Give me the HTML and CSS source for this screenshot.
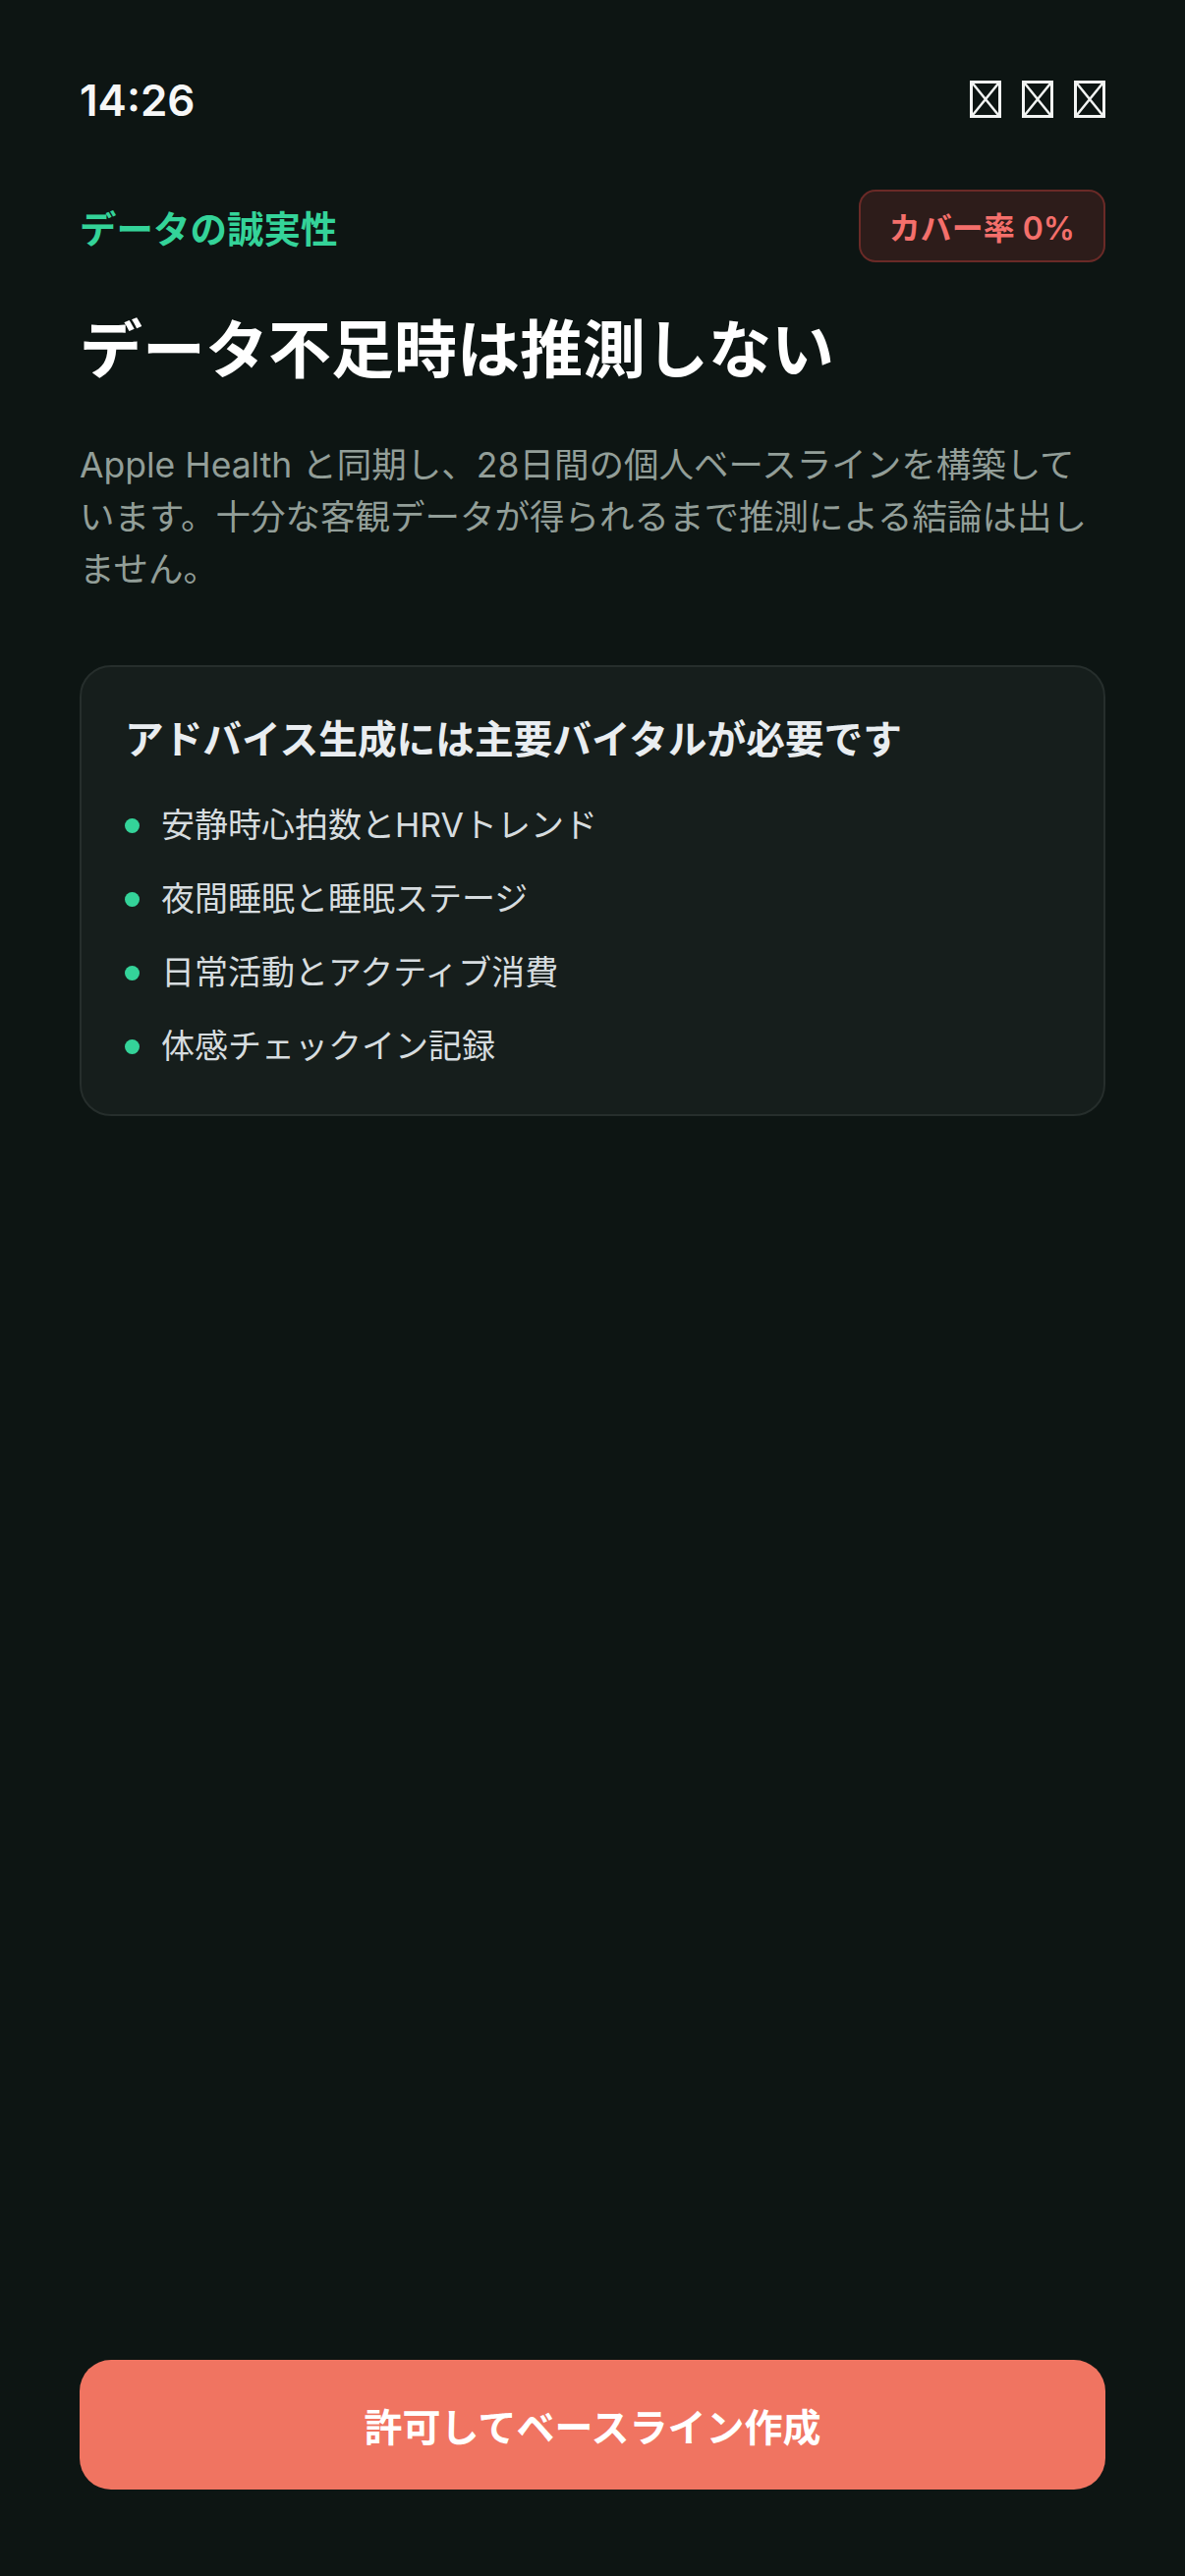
FILE: index.html
```html
<!DOCTYPE html>
<html lang="ja">
<head>
<meta charset="utf-8">
<title>データの誠実性</title>
<link rel="stylesheet" href="styles.css">
</head>
<body>
<div class="page">
  <div class="status-bar">
    <span class="time">14:26</span>
    <div class="status-icons">
      <svg class="tofu" viewBox="0 0 32 38"><rect x="1.5" y="1.5" width="29" height="35" fill="none" stroke="#f2f4f3" stroke-width="3"/><path d="M3 3 L29 35 M29 3 L3 35" stroke="#f2f4f3" stroke-width="2.5"/></svg>
      <svg class="tofu" viewBox="0 0 32 38"><rect x="1.5" y="1.5" width="29" height="35" fill="none" stroke="#f2f4f3" stroke-width="3"/><path d="M3 3 L29 35 M29 3 L3 35" stroke="#f2f4f3" stroke-width="2.5"/></svg>
      <svg class="tofu" viewBox="0 0 32 38"><rect x="1.5" y="1.5" width="29" height="35" fill="none" stroke="#f2f4f3" stroke-width="3"/><path d="M3 3 L29 35 M29 3 L3 35" stroke="#f2f4f3" stroke-width="2.5"/></svg>
    </div>
  </div>

  <div class="eyebrow-row">
    <span class="eyebrow">データの誠実性</span>
    <span class="badge">カバー率 0%</span>
  </div>

  <h1 class="title">データ不足時は推測しない</h1>

  <p class="lead">Apple Health と同期し、28日間の個人ベースラインを構築しています。十分な客観データが得られるまで推測による結論は出しません。</p>

  <section class="card">
    <h2 class="card-title">アドバイス生成には主要バイタルが必要です</h2>
    <ul class="req-list">
      <li class="req-item"><span class="dot"></span>安静時心拍数とHRVトレンド</li>
      <li class="req-item"><span class="dot"></span>夜間睡眠と睡眠ステージ</li>
      <li class="req-item"><span class="dot"></span>日常活動とアクティブ消費</li>
      <li class="req-item"><span class="dot"></span>体感チェックイン記録</li>
    </ul>
  </section>

  <button class="cta">許可してベースライン作成</button>
</div>
</body>
</html>
```

FILE: styles.css
```css
* { box-sizing: border-box; }

html, body {
  margin: 0;
  padding: 0;
  background: #0d1513;
}

body {
  font-family: Inter, "Noto Sans CJK JP", "Noto Sans", sans-serif;
  color: #ffffff;
}

.page {
  min-height: 2622px;
  display: flex;
  flex-direction: column;
  padding: 71px 81px 88px;
}

.status-bar {
  height: 60px;
  display: flex;
  align-items: center;
  justify-content: space-between;
}

.time {
  font-size: 44px;
  font-weight: 600;
  color: #f6f7f7;
  padding-top: 2px;
}

.status-icons {
  display: flex;
  gap: 21px;
  align-items: center;
}

.tofu {
  width: 32px;
  height: 38px;
  display: block;
}

.eyebrow-row {
  margin-top: 62px;
  height: 74px;
  display: flex;
  align-items: center;
  justify-content: space-between;
}

.eyebrow {
  font-size: 37.5px;
  font-weight: 700;
  color: #34d399;
}

.badge {
  height: 74px;
  padding: 0 29px;
  display: flex;
  align-items: center;
  border: 2px solid #6a2a27;
  background: #2d1c1a;
  border-radius: 17px;
  color: #f46f6b;
  font-size: 32px;
  font-weight: 600;
}

.title {
  margin: 49px 0 0;
  font-size: 64px;
  line-height: 80px;
  font-weight: 700;
  color: #ffffff;
}

.lead {
  margin: 51px 0 0;
  font-size: 35.5px;
  line-height: 53px;
  color: #929e98;
  font-weight: 400;
}

.card {
  margin-top: 71px;
  border: 2px solid #262e2c;
  background: #161e1c;
  border-radius: 32px;
  padding: 48px 44px 45px;
}

.card-title {
  margin: 0;
  font-size: 39.7px;
  line-height: 52px;
  font-weight: 700;
  color: #e9edf0;
}

.req-list {
  list-style: none;
  margin: 37px 0 0;
  padding: 0;
  display: flex;
  flex-direction: column;
  gap: 27px;
}

.req-item {
  display: flex;
  align-items: center;
  font-size: 34px;
  line-height: 48px;
  color: #d6dcdf;
}

.dot {
  width: 15px;
  height: 15px;
  border-radius: 50%;
  background: #34d399;
  margin-right: 22px;
  flex: none;
}

.cta {
  margin-top: auto;
  height: 132px;
  width: 100%;
  border: none;
  border-radius: 32px;
  background: #f07461;
  color: #ffffff;
  font-family: Inter, "Noto Sans CJK JP", sans-serif;
  font-size: 39px;
  font-weight: 700;
}
```
